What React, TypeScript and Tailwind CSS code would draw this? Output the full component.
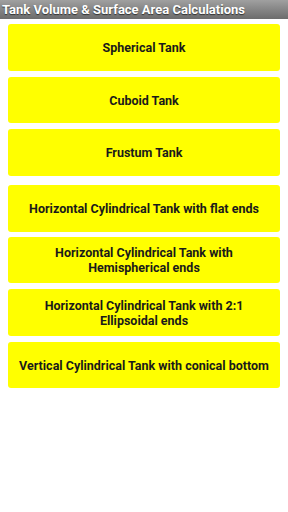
import React from 'react';

const tanks = [
  { label: 'Spherical Tank', box: 'mt-[5px] h-[47px]' },
  { label: 'Cuboid Tank', box: 'mt-[6px] h-[46px]' },
  { label: 'Frustum Tank', box: 'mt-[6px] h-[47px]' },
  { label: 'Horizontal Cylindrical Tank with flat ends', box: 'mt-[9px] h-[47px]' },
  { label: 'Horizontal Cylindrical Tank with Hemispherical ends', box: 'mt-[5px] h-[46px]' },
  { label: 'Horizontal Cylindrical Tank with 2:1 Ellipsoidal ends', box: 'mt-[6px] h-[47px]' },
  { label: 'Vertical Cylindrical Tank with conical bottom', box: 'mt-[6px] h-[46px]' },
];

export default function App() {
  return (
    <div className="w-[288px] h-[512px] bg-white flex flex-col font-['Roboto',sans-serif]">
      {/* title bar */}
      <div className="h-[19px] flex items-center px-[2px] bg-gradient-to-b from-[#a0a0a0] to-[#6c6c6c]">
        <span className="text-[13px] font-bold text-white leading-none [text-shadow:0_1px_1px_rgba(0,0,0,0.6)] whitespace-nowrap">
          Tank Volume &amp; Surface Area Calculations
        </span>
      </div>

      <div className="flex flex-col px-[8px]">
        {tanks.map((t) => (
          <button
            key={t.label}
            className={`${t.box} w-full bg-[#ffff00] rounded-[3px] flex items-center justify-center px-[8px] text-center text-[12.5px] leading-[15px] font-bold text-[#1a1a1a]`}
          >
            {t.label}
          </button>
        ))}
      </div>
    </div>
  );
}
